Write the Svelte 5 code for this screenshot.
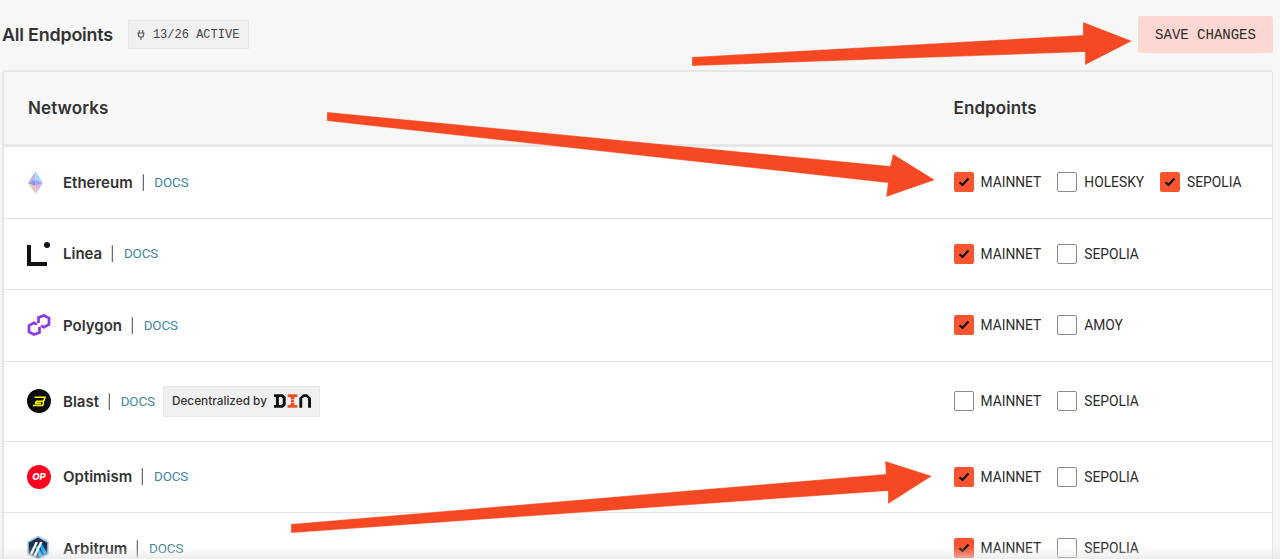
<script>
  const networks = [
    { name: 'Ethereum', icon: 'eth', eps: [['MAINNET', true], ['HOLESKY', false], ['SEPOLIA', true]] },
    { name: 'Linea', icon: 'linea', eps: [['MAINNET', true], ['SEPOLIA', false]] },
    { name: 'Polygon', icon: 'polygon', eps: [['MAINNET', true], ['AMOY', false]] },
    { name: 'Blast', icon: 'blast', din: true, eps: [['MAINNET', false], ['SEPOLIA', false]] },
    { name: 'Optimism', icon: 'op', eps: [['MAINNET', true], ['SEPOLIA', false]] },
    { name: 'Arbitrum', icon: 'arb', eps: [['MAINNET', true], ['SEPOLIA', false]] }
  ];
</script>

<div class="page">
  <header class="top">
    <div class="title">
      <h1>All Endpoints</h1>
      <span class="badge">
        <svg width="12" height="12" viewBox="0 0 12 12" fill="none" stroke="#555" stroke-width="1.1">
          <path d="M4.2 1v3M7.8 1v3M2.5 4h7M3.3 4v1.6a2.7 2.7 0 0 0 5.4 0V4M6 8.3V11" />
        </svg>
        13/26 ACTIVE
      </span>
    </div>
    <button class="save">SAVE CHANGES</button>
  </header>

  <section class="card">
    <div class="head">
      <div class="col-a">Networks</div>
      <div class="col-b">Endpoints</div>
    </div>
    {#each networks as n}
      <div class="row">
        <div class="net">
          <span class="icon">
            {#if n.icon === 'eth'}
              <svg width="17" height="23" viewBox="0 0 18 24">
                <polygon points="9,0 9,9 1,12.5" fill="#c3aeee" />
                <polygon points="9,0 17,12.5 9,9" fill="#98def0" />
                <polygon points="1,12.5 9,9 9,16" fill="#8098f0" />
                <polygon points="17,12.5 9,9 9,16" fill="#b399f2" />
                <polygon points="1,12.5 9,16 9,24" fill="#f0c2a2" />
                <polygon points="17,12.5 9,16 9,24" fill="#d2b8f0" />
              </svg>
            {:else if n.icon === 'linea'}
              <svg width="23" height="24" viewBox="0 0 23 24">
                <path d="M0 3h4v17H20v4H0z" fill="#111" />
                <circle cx="20" cy="3" r="3" fill="#111" />
              </svg>
            {:else if n.icon === 'polygon'}
              <svg width="24" height="22" viewBox="0 0 24 22" fill="none" stroke="#8a3ae2" stroke-width="2.700" stroke-linejoin="miter">
                <path d="M12.5 13v5.500L7 20.500 2 18v-6.500L7 8.800l3 1.600" />
                <path d="M11.500 9V3.500L17 1.500l5 2.500v6.500l-5 2.700-3-1.600" />
              </svg>
            {:else if n.icon === 'blast'}
              <svg width="24" height="24" viewBox="0 0 24 24" fill="none">
                <circle cx="12" cy="12" r="12" fill="#0b0b0b" />
                <path d="M7.500 8.300H18l-.9 3-1.300.9.7 1-.8 3.300H5.800M9.300 12.200H15.500M9.300 12.200 8.700 14.400H14" stroke="#fcfc03" stroke-width="1.600" />
              </svg>
            {:else if n.icon === 'op'}
              <span class="op">OP</span>
            {:else}
              <svg width="22" height="24" viewBox="0 0 22 24">
                <polygon points="11,0.500 21,6 21,18 11,23.500 1,18 1,6" fill="#213147" stroke="#9dcced" stroke-width="1.500" />
                <polygon points="12,9 14.500,7.500 20,17 17,19" fill="#12aaff" />
                <polygon points="8,11 10.500,9.500 16,20 13,22" fill="#12aaff" />
                <polygon points="8.500,6 11,6 5,19 3,17.500" fill="#fff" />
                <polygon points="13,6 15.500,6 8.500,21 6.500,19.500" fill="#fff" />
              </svg>
            {/if}
          </span>
          <span class="name">{n.name}</span>
          <span class="sep">|</span>
          <span class="docs">DOCS</span>
          {#if n.din}
            <span class="din">
              Decentralized by
              <svg width="37" height="14" viewBox="0 0 38 14">
                <path d="M0 0h9l3 3v8l-3 3H0v-3h2V3H0zM5 3v8h2.500l1.500-1.500v-5L7.500 3z" fill="#111" fill-rule="evenodd" />
                <path d="M14 0h10v3h-3v2h-4V3h-3zM17.500 5.500h3v3h-3zM17 9h4v2h3v3H14v-3h3z" fill="#f2502a" />
                <path d="M26 14V4l4-4h4l4 4v10h-3V4.500L33 3h-2l-2 1.500V14z" fill="#111" />
              </svg>
            </span>
          {/if}
        </div>
        <div class="eps">
          {#each n.eps as [label, on]}
            <label class="ep">
              <span class="box" class:on>
                {#if on}
                  <svg width="12" height="10" viewBox="0 0 12 10" fill="none" stroke="#111" stroke-width="2.200">
                    <path d="M1.500 5.200 4.500 8l6-6.500" />
                  </svg>
                {/if}
              </span>
              {label}
            </label>
          {/each}
        </div>
      </div>
    {/each}
  </section>

  <div class="fade"></div>

  <svg class="arrows" width="1280" height="559" viewBox="0 0 1280 559">
    <g fill="#f64822" stroke="#fff" stroke-width="0.300" stroke-linejoin="round">
      <polygon points="692,57 1083,35 1083,22 1132,41 1085,65 1085,52 692,66" />
      <polygon points="327,112 890,166 893,154 935,180 886,197 888,183 327,121" />
      <polygon points="291,524 886,474 885,461 932,476 888,504 888,491 291,533" />
    </g>
  </svg>
</div>

<style>
  :global(body) {
    margin: 0;
    background: #f7f7f7;
    overflow: hidden;
  }

  .page {
    position: relative;
    height: 559px;
    overflow: hidden;
    background: #f7f7f7;
    font-family: Inter, "Noto Sans", sans-serif;
    color: #2b2b2b;
    padding: 16px 7px 0 2px;
    box-sizing: border-box;
  }

  .top {
    display: flex;
    justify-content: space-between;
    align-items: center;
    height: 37px;
    margin-bottom: 17px;
  }

  .title {
    display: flex;
    align-items: center;
    gap: 15px;
  }

  h1 {
    margin: 0;
    font-size: 17.900px;
    font-weight: 600;
    letter-spacing: -0.200px;
    color: #333;
  }

  .badge {
    display: flex;
    align-items: center;
    gap: 6px;
    height: 29px;
    box-sizing: border-box;
    padding: 0 9px 0 6px;
    background: #f0f0f0;
    border: 1px solid #e6e6e6;
    font-family: "Liberation Mono", monospace;
    font-size: 12px;
    color: #444;
  }

  .save {
    width: 135px;
    height: 37px;
    padding: 0;
    border: none;
    border-radius: 2px;
    background: #fdd8d2;
    font-family: "Liberation Mono", monospace;
    font-size: 14px;
    color: #2b2b2b;
  }

  .card {
    background: #fff;
    border: 2px solid #e6e6e6;
    border-bottom: none;
    border-radius: 4px 4px 0 0;
    border-right-width: 1.500px;
  }

  .head {
    display: grid;
    grid-template-columns: 949.500px 1fr;
    align-items: center;
    height: 72px;
    background: #f7f7f7;
    border-bottom: 3px solid #e6e6e6;
    font-size: 17px;
    letter-spacing: 0.100px;
    font-weight: 600;
    color: #333;
  }

  .col-a {
    padding-left: 24px;
  }

  .row {
    display: grid;
    grid-template-columns: 949.500px 1fr;
    align-items: center;
    min-height: 70.500px;
    border-bottom: 1px solid #e4e4e4;
  }

  .net {
    display: flex;
    align-items: center;
    padding-left: 23px;
  }

  .icon {
    width: 36px;
    flex: none;
    display: flex;
    align-items: center;
  }

  .icon svg {
    display: block;
  }

  .op {
    width: 24px;
    height: 24px;
    border-radius: 50%;
    background: #ff0420;
    color: #fff;
    font-size: 9.500px;
    font-weight: 800;
    font-style: italic;
    display: flex;
    align-items: center;
    justify-content: center;
  }

  .name {
    font-size: 15px;
    font-weight: 600;
    color: #333;
  }

  .sep {
    margin: 0 9px 0 8px;
    font-size: 14px;
    color: #555;
    will-change: transform;
  }

  .docs {
    font-family: Roboto, sans-serif;
    font-size: 13.400px;
    letter-spacing: -0.100px;
    color: #3f87a0;
  }

  .din {
    display: flex;
    align-items: center;
    gap: 7px;
    height: 31px;
    margin: 24px 0 24px 8px;
    padding: 0 8px;
    background: #f0f0f0;
    border: 1px solid #e8e8e8;
    box-sizing: border-box;
    font-size: 11.800px;
    font-weight: 500;
    color: #333;
  }

  .eps {
    display: flex;
    gap: 16px;
  }

  .ep {
    display: flex;
    align-items: center;
    gap: 7px;
    font-family: Roboto, sans-serif;
    font-size: 13.800px;
    color: #2b2b2b;
  }

  .box {
    width: 20px;
    height: 20px;
    box-sizing: border-box;
    border: 1.500px solid #8a8a8a;
    border-radius: 2px;
    background: #fff;
    display: flex;
    align-items: center;
    justify-content: center;
  }

  .box.on {
    background: #fa5530;
    border-color: #fa5530;
  }

  .fade {
    position: absolute;
    left: 0;
    right: 0;
    bottom: 0;
    height: 12px;
    background: linear-gradient(rgba(235, 235, 235, 0), rgba(225, 225, 225, 0.600));
  }

  .arrows {
    position: absolute;
    left: 0;
    top: 0;
    pointer-events: none;
  }
</style>
